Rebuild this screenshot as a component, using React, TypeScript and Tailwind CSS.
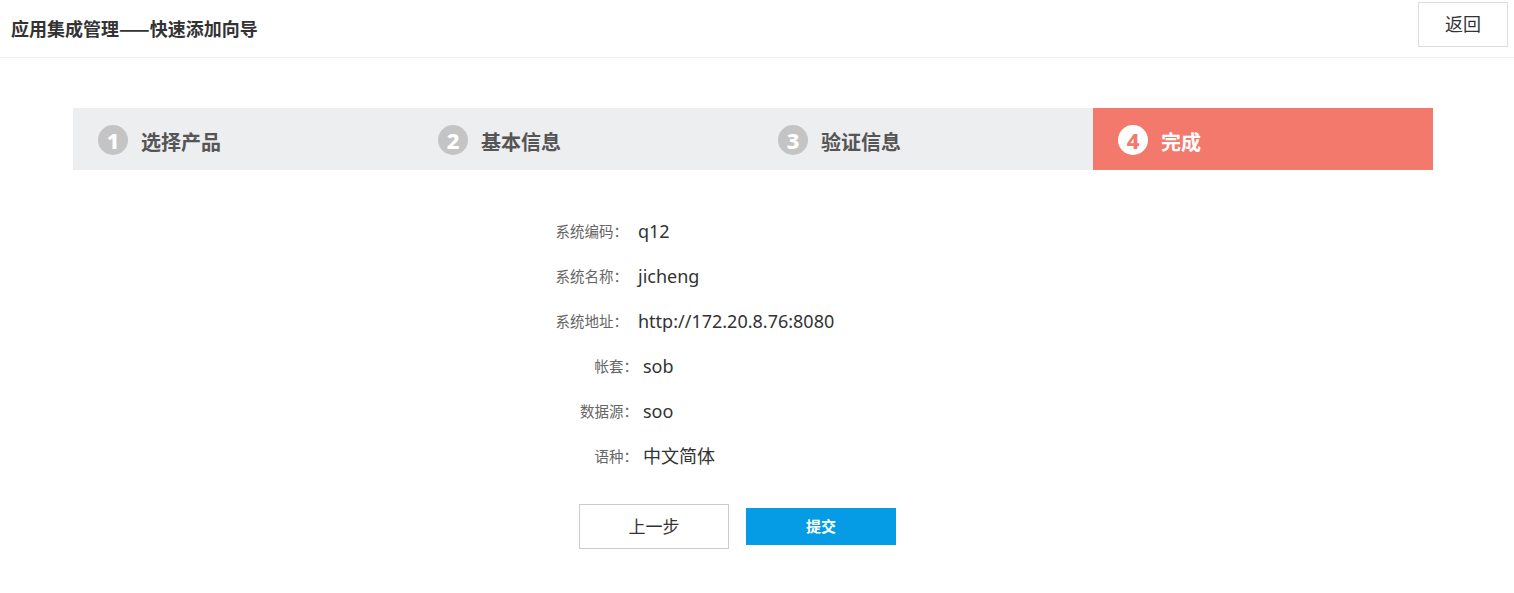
const font = { fontFamily: '"Noto Sans", "Noto Sans CJK SC", sans-serif' };
const cjk = { fontFamily: '"Noto Sans CJK SC", "Noto Sans", sans-serif' };

const steps = [
  { no: 1, label: "选择产品" },
  { no: 2, label: "基本信息" },
  { no: 3, label: "验证信息" },
  { no: 4, label: "完成", active: true },
];

const rows = [
  { label: "系统编码：", value: "q12", pad: false },
  { label: "系统名称：", value: "jicheng", pad: false },
  { label: "系统地址：", value: "http://172.20.8.76:8080", pad: false },
  { label: "帐套：", value: "sob", pad: true },
  { label: "数据源：", value: "soo", pad: true },
  { label: "语种：", value: "中文简体", pad: true },
];

const App = () => {
  return (
    <div className="w-[1514px] h-[593px] bg-white text-[#333]" style={font}>
      <div className="h-[58px] flex items-center justify-between border-b border-[#eeeeee] pl-[11px] pr-[6px]">
        <div className="text-[18px] font-bold text-[#333]" style={cjk}>
          应用集成管理——快速添加向导
        </div>
        <button className="w-[90px] h-[45px] mb-[9px] border border-[#dddddd] bg-white text-[18px] text-[#333]">
          返回
        </button>
      </div>

      <div className="ml-[73px] mt-[50px] w-[1360px] h-[62px] flex bg-[#edeef0]">
        {steps.map((s) => (
          <div
            key={s.no}
            className={`w-[340px] flex items-center pl-[25px] pt-[2px] ${s.active ? "bg-[#f3796c]" : ""}`}
          >
            <div
              className={`w-[30px] h-[30px] rounded-full flex items-center justify-center text-[22px] font-extrabold leading-none ${
                s.active ? "bg-white text-[#f3796c]" : "bg-[#c4c4c4] text-white"
              }`}
            >
              {s.no}
            </div>
            <div
              className={`ml-[13px] mt-[5px] text-[20px] font-bold ${s.active ? "text-white" : "text-[#555]"}`}
            >
              {s.label}
            </div>
          </div>
        ))}
      </div>

      <div className="mt-[39px] flex flex-col">
        {rows.map((r) => (
          <div key={r.label} className={`h-[45px] flex items-center ${r.pad ? "pl-[10px]" : ""}`}>
            <div className="w-[628px] text-right text-[14.5px] text-[#666]">{r.label}</div>
            <div className={`${r.pad ? "ml-[5px]" : "ml-[10px]"} text-[18px] text-[#333]`}>{r.value}</div>
          </div>
        ))}
      </div>

      <div className="mt-[25px] flex items-center pl-[579px] gap-[17px]">
        <button className="w-[150px] h-[45px] border border-[#cccccc] bg-white text-[17px] text-[#333]">
          上一步
        </button>
        <button className="w-[150px] h-[37px] bg-[#069be5] text-white text-[15px] font-semibold">
          提交
        </button>
      </div>
    </div>
  );
};

export default App;
